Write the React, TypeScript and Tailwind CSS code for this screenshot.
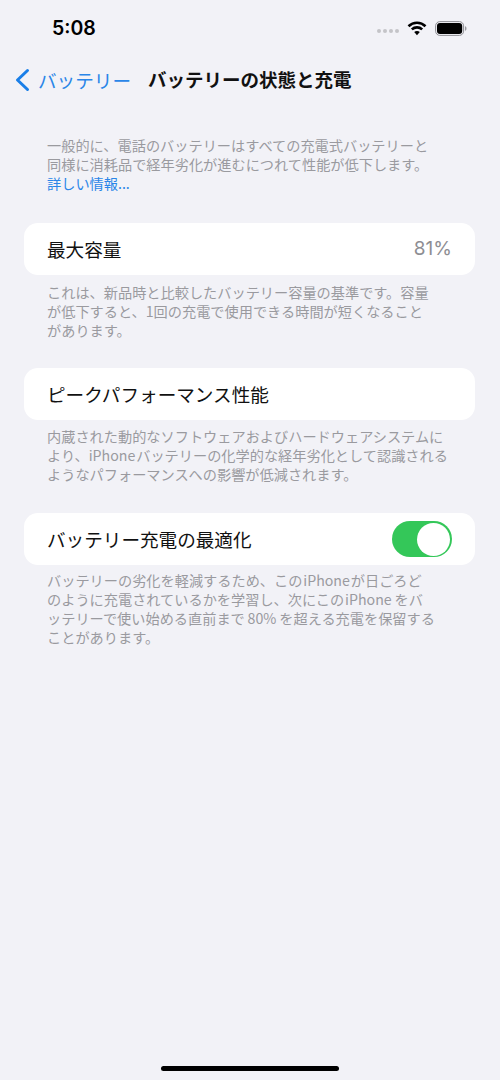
const jp = { fontFamily: '"Noto Sans CJK JP", Inter, sans-serif' };

function Note({ lines, className = "" }: { lines: string[]; className?: string }) {
  return (
    <div className={`pl-[47px] text-[14.2px] leading-[19px] text-[#9a9a9f] ${className}`}>
      {lines.map((l) => (
        <div key={l} className="whitespace-nowrap">{l}</div>
      ))}
    </div>
  );
}

function Card({ children }: { children: React.ReactNode }) {
  return (
    <div className="mx-[24px] flex h-[52px] w-[451px] items-center justify-between rounded-[14px] bg-white pl-[23px] pr-[23px] text-[18.6px] text-[#111]">
      {children}
    </div>
  );
}

export default function App() {
  return (
    <div style={jp} className="flex h-[1080px] w-[500px] flex-col overflow-hidden bg-[#f2f2f7]">
      <div className="flex h-[58px] items-center justify-between pl-[52px] pr-[33px]">
        <span className="text-[19.5px] font-semibold text-black" style={{ fontFamily: "Inter, sans-serif" }}>5:08</span>
        <div className="flex items-center gap-[8px]">
          <div className="mt-[4px] flex gap-[2px]">
            {[0, 1, 2, 3].map((i) => (
              <span key={i} className="h-[4px] w-[4px] rounded-full bg-[#c4c4c8]" />
            ))}
          </div>
          <svg width="20" height="15" viewBox="0 0 20 15" className="mb-[2px]">
            <path d="M1.5 5.2C6.3 .6 13.7 .6 18.5 5.2" fill="none" stroke="#000" strokeWidth="2.6" />
            <path d="M4.8 8.4C7.8 5.7 12.2 5.7 15.2 8.4" fill="none" stroke="#000" strokeWidth="2.6" />
            <path d="M7.2 11.1L10 14.2L12.8 11.1C11.2 9.7 8.8 9.7 7.2 11.1Z" fill="#000" />
          </svg>
          <svg width="32" height="15" viewBox="0 0 32 15" className="mb-[2px]">
            <rect x="0.6" y="0.6" width="28" height="13.8" rx="4.2" fill="none" stroke="#8e8e93" strokeWidth="1" />
            <rect x="2" y="2" width="25.2" height="11" rx="3" fill="#000" />
            <path d="M30 5.2C31 5.5 31.5 6.4 31.5 7.5C31.5 8.6 31 9.5 30 9.8Z" fill="#9a9a9f" />
          </svg>
        </div>
      </div>

      <div className="flex h-[44px] items-center pl-[14px]">
        <svg width="16" height="24" viewBox="0 0 16 24" fill="none">
          <path d="M13.5 2.5L3.5 12L13.5 21.5" stroke="#1a7fe8" strokeWidth="3" strokeLinecap="round" strokeLinejoin="round" />
        </svg>
        <span className="ml-[8px] text-[18.6px] text-[#2a86e8]">バッテリー</span>
        <span className="ml-[17px] text-[18.5px] font-bold text-[#111]">バッテリーの状態と充電</span>
      </div>

      <Note className="mt-[34px]" lines={["一般的に、電話のバッテリーはすべての充電式バッテリーと", "同様に消耗品で経年劣化が進むにつれて性能が低下します。"]} />
      <div className="pl-[47px] text-[14.2px] leading-[19px] text-[#2a86e8]">詳しい情報...</div>

      <div className="mt-[30px]">
        <Card>
          <span className="pb-[1px]">最大容量</span>
          <span className="text-[19px] text-[#8e8e93]" style={{ fontFamily: "Inter, sans-serif" }}>81%</span>
        </Card>
      </div>
      <Note className="mt-[8px]" lines={["これは、新品時と比較したバッテリー容量の基準です。容量", "が低下すると、1回の充電で使用できる時間が短くなること", "があります。"]} />

      <div className="mt-[28px]">
        <Card>
          <span className="pb-[1px]">ピークパフォーマンス性能</span>
        </Card>
      </div>
      <Note className="mt-[7px] pb-[1px]" lines={["内蔵された動的なソフトウェアおよびハードウェアシステムに", "より、iPhone\u200Aバッテリーの化学的な経年劣化として認識される", "ようなパフォーマンスへの影響が低減されます。"]} />

      <div className="mt-[28px]">
        <Card>
          <span className="pb-[1px]">バッテリー充電の最適化</span>
          <div className="flex h-[36px] w-[60px] items-center justify-end rounded-full bg-[#34c759] pr-[2px]">
            <div className="h-[33px] w-[33px] rounded-full bg-white" />
          </div>
        </Card>
      </div>
      <Note className="mt-[6px]" lines={["バッテリーの劣化を軽減するため、この\u200AiPhone\u200Aが日ごろど", "のように充電されているかを学習し、次にこの\u200AiPhone\u2009をバ", "ッテリーで使い始める直前まで\u200980%\u2009を超える充電を保留する", "ことがあります。"]} />

      <div className="mt-auto flex justify-center pb-[9px]">
        <div className="h-[5px] w-[178px] rounded-full bg-black" />
      </div>
    </div>
  );
}
